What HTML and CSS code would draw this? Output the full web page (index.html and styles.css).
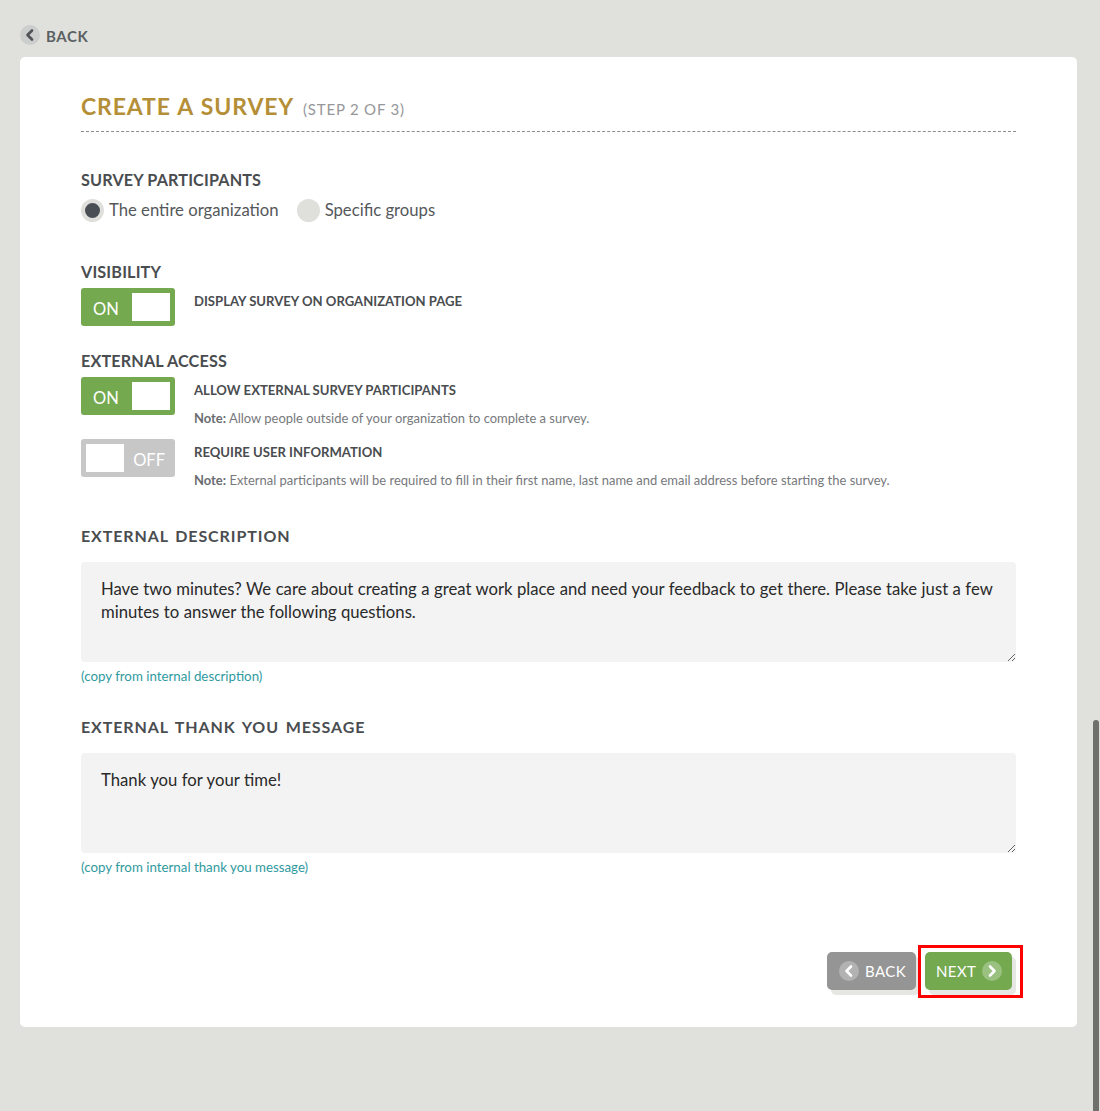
FILE: index.html
```html
<!DOCTYPE html>
<html lang="en">
<head>
<meta charset="utf-8">
<title>Create a survey</title>
<link rel="stylesheet" href="styles.css">
</head>
<body>
<a class="top-back" href="#">
  <span class="top-back-icon"><svg viewBox="0 0 20 20" width="20" height="20"><path d="M12 5.500 7.500 10l4.500 4.500" fill="none" stroke="#4f5358" stroke-width="2.600" stroke-linecap="round" stroke-linejoin="round"/></svg></span>
  <span class="top-back-label">BACK</span>
</a>
<main class="card">
  <header class="title-row">
    <h1>CREATE A SURVEY</h1>
    <span class="step">(STEP 2 OF 3)</span>
  </header>

  <section class="participants">
    <h2>SURVEY PARTICIPANTS</h2>
    <div class="radios">
      <label class="radio"><span class="dot dot-on"></span>The entire organization</label>
      <label class="radio"><span class="dot"></span>Specific groups</label>
    </div>
  </section>

  <section class="visibility">
    <h2>VISIBILITY</h2>
    <div class="option">
      <div class="toggle on"><span class="toggle-text">ON</span><span class="knob"></span></div>
      <div class="option-text"><h3>DISPLAY SURVEY ON ORGANIZATION PAGE</h3></div>
    </div>
  </section>

  <section class="access">
    <h2>EXTERNAL ACCESS</h2>
    <div class="option">
      <div class="toggle on"><span class="toggle-text">ON</span><span class="knob"></span></div>
      <div class="option-text">
        <h3>ALLOW EXTERNAL SURVEY PARTICIPANTS</h3>
        <p><b>Note:</b> Allow people outside of your organization to complete a survey.</p>
      </div>
    </div>
    <div class="option option-next">
      <div class="toggle off"><span class="knob"></span><span class="toggle-text">OFF</span></div>
      <div class="option-text">
        <h3>REQUIRE USER INFORMATION</h3>
        <p><b>Note:</b> External participants will be required to fill in their first name, last name and email address before starting the survey.</p>
      </div>
    </div>
  </section>

  <section class="field field-first">
    <h2 class="spaced">EXTERNAL DESCRIPTION</h2>
    <textarea readonly>Have two minutes? We care about creating a great work place and need your feedback to get there. Please take just a few minutes to answer the following questions.</textarea>
    <a class="copy" href="#">(copy from internal description)</a>
  </section>

  <section class="field field-second">
    <h2 class="spaced">EXTERNAL THANK YOU MESSAGE</h2>
    <textarea readonly>Thank you for your time!</textarea>
    <a class="copy" href="#">(copy from internal thank you message)</a>
  </section>

  <footer class="actions">
    <a class="btn btn-back" href="#">
      <span class="btn-icon"><svg viewBox="0 0 20 20" width="20" height="20"><path d="M12 5.500 7.500 10l4.500 4.500" fill="none" stroke="#fff" stroke-width="2.600" stroke-linecap="round" stroke-linejoin="round"/></svg></span>
      BACK
    </a>
    <div class="highlighted">
      <a class="btn btn-next" href="#">
        NEXT
        <span class="btn-icon"><svg viewBox="0 0 20 20" width="20" height="20"><path d="M8 5.500 12.500 10 8 14.500" fill="none" stroke="#fff" stroke-width="2.600" stroke-linecap="round" stroke-linejoin="round"/></svg></span>
      </a>
      <span class="highlight-box"></span>
    </div>
  </footer>
</main>
<div class="scroll-thumb"></div>
</body>
</html>
```
FILE: styles.css
```css
* { box-sizing: border-box; }
html, body { height: 1111px; overflow: hidden; }
body {
  margin: 0;
  padding: 25px 23px 0 20px;
  background: #e0e1dc;
  font-family: Lato, "Liberation Sans", sans-serif;
  color: #4a4d50;
  position: relative;
}
a { text-decoration: none; }
h1, h2, h3, p { margin: 0; }

.top-back {
  display: flex;
  align-items: center;
  gap: 6px;
  height: 20px;
  color: #5b5f63;
  font-size: 15px;
  font-weight: 700;
  letter-spacing: .6px;
}
.top-back-label { padding-top: 2px; }
.top-back-icon {
  width: 20px;
  height: 20px;
  border-radius: 50%;
  background: #cccdcd;
  display: block;
}
.top-back-icon svg, .btn-icon svg { display: block; }

.card {
  margin-top: 12px;
  width: 1057px;
  height: 970px;
  background: #fff;
  border-radius: 5px;
  padding: 35px 61px 0;
}
.title-row {
  display: flex;
  align-items: baseline;
  gap: 9px;
  height: 40px;
  border-bottom: 1px dashed #8d8d8d;
  width: 935px;
}
h1 {
  font-size: 23px;
  line-height: 28px;
  font-weight: 700;
  letter-spacing: .85px;
  word-spacing: 1px;
  color: #b58f38;
}
.step {
  font-size: 15px;
  letter-spacing: .8px;
  color: #96979a;
}
h2 {
  font-size: 16.200px;
  line-height: 20px;
  font-weight: 700;
  letter-spacing: .15px;
  color: #4a4d50;
}
h2.spaced { font-size: 16px; letter-spacing: .9px; word-spacing: 2px; }
h3 {
  font-size: 13.100px;
  line-height: 18px;
  font-weight: 700;
  color: #4a4d50;
}
.participants { margin-top: 38px; }
.radios { display: flex; gap: 18px; margin-top: 8px; }
.radio {
  display: flex;
  align-items: center;
  gap: 5px;
  height: 24px;
  font-size: 16.700px;
  color: #55585b;
}
.dot {
  width: 23px;
  height: 23px;
  border-radius: 50%;
  background: #dfe0db;
  display: block;
}
.dot-on { border: 4.500px solid #dfe0db; background: #4a4f56; }

.visibility { margin-top: 40px; }
.access { margin-top: 25px; }
.option { display: flex; gap: 19px; margin-top: 6px; }
.option-next { margin-top: 12px; }
.option-text h3 { margin-top: 3.500px; }
.option-text p {
  margin-top: 11.500px;
  font-size: 12.960px;
  line-height: 17px;
  color: #77797c;
}
.option-text b { font-weight: 700; color: #6a6c6f; }
.toggle {
  flex: none;
  width: 94px;
  height: 38px;
  border-radius: 3px;
  padding: 5px;
  display: flex;
  align-items: center;
  justify-content: space-between;
  color: #fff;
  font-size: 16.500px;
}
.toggle-text { padding-top: 3px; }
.toggle.on { background: #74a950; padding-left: 12px; }
.toggle.off { background: #c7c7c7; padding-right: 10px; }
.knob { width: 38px; height: 28px; background: #fff; display: block; }

.field-first { margin-top: 37px; }
.field-second { margin-top: 32px; }
textarea {
  display: block;
  width: 935px;
  height: 100px;
  margin-top: 16px;
  padding: 16px 20px;
  border: 0;
  outline: 0;
  border-radius: 4px;
  background: #f3f3f3;
  color: #2a2a2a;
  font-family: Lato, "Liberation Sans", sans-serif;
  font-size: 16.700px;
  word-spacing: .2px;
  line-height: 23px;
  resize: vertical;
}
.copy {
  display: block;
  margin-top: 5px;
  font-size: 13.300px;
  line-height: 18px;
  color: #2f9aa0;
}

.actions {
  display: flex;
  justify-content: flex-end;
  gap: 9px;
  margin-top: 76px;
  padding-right: 4px;
  width: 935px;
}
.btn {
  display: flex;
  align-items: center;
  gap: 6px;
  height: 38px;
  border-radius: 5px;
  color: #fff;
  font-size: 15px;
  letter-spacing: .4px;
  box-shadow: 4px 5px 0 #e6e7e3;
}
.btn-back { width: 89px; padding-left: 12px; background: #959595; }
.btn-next { width: 87px; padding-left: 11px; background: #74a950; }
.btn-icon {
  width: 20px;
  height: 20px;
  border-radius: 50%;
  background: rgba(255, 255, 255, .28);
  display: block;
}
.highlighted { position: relative; }
.highlight-box {
  position: absolute;
  left: -7px;
  top: -7px;
  width: 105px;
  height: 53px;
  border: 3px solid #ff0000;
}
.scroll-thumb {
  position: absolute;
  left: 1093px;
  top: 720px;
  width: 6px;
  height: 391px;
  border-radius: 3px 3px 0 0;
  background: #6f6f6b;
}
```
